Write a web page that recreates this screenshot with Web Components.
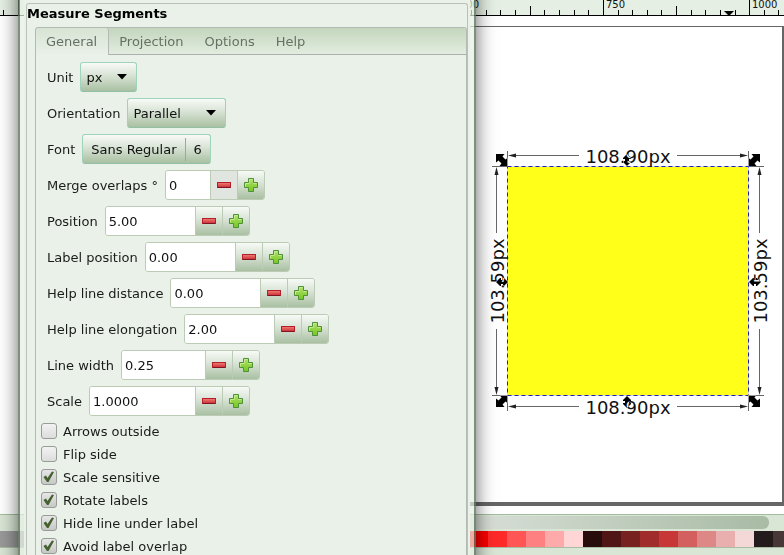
<!DOCTYPE html>
<html lang="en">
<head>
<meta charset="utf-8">
<title>Measure Segments</title>
<style>
  html, body { margin: 0; height: 100%; }
  body {
    font: 13px/16px "DejaVu Sans", sans-serif;
    color: #1a1c1a;
    overflow: hidden;
    background: #fff;
  }
</style>
</head>
<body>
<desktop-shell>
  <editor-window slot="back"></editor-window>
  <effect-dialog slot="front" heading="Measure Segments">
    <tab-book labels="General,Projection,Options,Help">
      <choice-field label="Unit" value="px" width="57"></choice-field>
      <choice-field label="Orientation" value="Parallel" width="99"></choice-field>
      <font-field label="Font" face="Sans Regular" size="6"></font-field>
      <spin-field label="Merge overlaps °" value="0" entry="45" minimum></spin-field>
      <spin-field label="Position" value="5.00" entry="90"></spin-field>
      <spin-field label="Label position" value="0.00" entry="90"></spin-field>
      <spin-field label="Help line distance" value="0.00" entry="90"></spin-field>
      <spin-field label="Help line elongation" value="2.00" entry="90"></spin-field>
      <spin-field label="Line width" value="0.25" entry="84"></spin-field>
      <spin-field label="Scale" value="1.0000" entry="106"></spin-field>
      <check-field slot="checks" label="Arrows outside"></check-field>
      <check-field slot="checks" label="Flip side"></check-field>
      <check-field slot="checks" label="Scale sensitive" checked></check-field>
      <check-field slot="checks" label="Rotate labels" checked></check-field>
      <check-field slot="checks" label="Hide line under label" checked></check-field>
      <check-field slot="checks" label="Avoid label overlap" checked></check-field>
    </tab-book>
  </effect-dialog>
</desktop-shell>

<script>
const define = (name, render) => customElements.define(name, class extends HTMLElement {
  connectedCallback() {
    if (this.shadowRoot) return;
    this.attachShadow({ mode: "open" }).innerHTML = render(this);
  }
});

define("desktop-shell", () => `
  <style>
    :host { display: grid; height: 100vh; overflow: hidden;
      grid-template: 100vh / 18px minmax(0, 458fr) minmax(0, 308fr); }
    ::slotted([slot=back]) { grid-area: 1 / 1 / 2 / 4; }
    ::slotted([slot=front]) { grid-area: 1 / 2 / 2 / 3; }
  </style>
  <slot name="back"></slot><slot name="front"></slot>`);

define("editor-window", () => `
  <style>
    :host { display: grid; grid-template: 16px minmax(0, 1fr) 17px 24px / minmax(0, 1fr);
      overflow: hidden; background: #fff; }
  </style>
  <ruler-bar></ruler-bar>
  <canvas-page></canvas-page>
  <scroll-strip></scroll-strip>
  <colour-palette></colour-palette>`);

define("ruler-bar", () => {
  let ticks = "";
  for (let k = -41; k < 60; k++) {
    const x = Math.floor(603.4 + k * 14.63) + 0.5;
    const top = k % 10 === 0 ? 0 : k % 5 === 0 ? 6 : 10;
    ticks += `M${x} ${top}V15`;
  }
  return `
  <style>
    :host { display: block; background: #e5efe3; overflow: hidden; }
    svg { display: block; }
    text { font: 10px "DejaVu Sans", sans-serif; fill: #111; }
  </style>
  <svg width="100%" height="16" aria-label="Ruler">
    <path d="${ticks}" stroke="#000" fill="none"/>
    <rect y="15" width="100%" height="1"/>
    <path d="M724 11H734L729 16Z"/>
    <text x="460" y="8">500</text>
    <text x="606" y="8">750</text>
    <text x="752" y="8">1000</text>
  </svg>`;
});

define("canvas-page", () => {
  const diag = `<path d="M-6-6H2.500L0.500-3.500L3.500-0.500L6-2.500V6H-2.500L-0.500 3.500L-3.500 0.500L-6 2.500Z"/>`;
  const vert = `<path d="M0-6L4-2V-1H2V1H4V2L0 6L-4 2V1H-2V-1H-4V-2Z"/>`;
  return `
  <style>
    :host { display: grid; padding: 10px 0 8px 60px; background: #fff; }
    .page { display: flex; justify-content: flex-end; overflow: hidden; background: #fff;
      border: solid #666; border-width: 1px 2px 4px 1px; }
    svg { display: block; flex: none; }
    text { font: 18px "DejaVu Sans", sans-serif; fill: #111; text-anchor: middle; }
    .handles { fill: #fff; mix-blend-mode: difference; }
  </style>
  <div class="page">
    <svg width="302" height="420" viewBox="480 27 302 420" role="img" aria-label="Yellow square with dimensions">
      <rect x="480" y="27" width="302" height="420" fill="#fff"/>
      <rect x="508" y="167" width="240" height="228" fill="#ffff1a"/>
      <g fill="none" stroke="#666">
        <path d="M507.500 151V166M748.500 151V166M507.500 396V411M748.500 396V411"/>
        <path d="M492 166.500H507M749 166.500H764M492 395.500H507M749 395.500H764"/>
        <path d="M510 155.500H579M677 155.500H746M510 406.500H579M677 406.500H746"/>
        <path d="M496.500 169V233M496.500 329V393M759.500 169V233M759.500 329V393"/>
      </g>
      <g fill="#222">
        <path d="M508 155.500l8-2v4zM748 155.500l-8-2v4zM508 406.500l8-2v4zM748 406.500l-8-2v4z"/>
        <path d="M496.500 167l-2 8h4zM759.500 167l-2 8h4zM496.500 395l-2-8h4zM759.500 395l-2-8h4z"/>
      </g>
      <rect x="507.500" y="166.500" width="241" height="229" fill="none" stroke="#d8d8e4"/>
      <rect x="507.500" y="166.500" width="241" height="229" fill="none" stroke="#2222b0" stroke-dasharray="4 3"/>
      <text x="628" y="163">108.90px</text>
      <text x="628" y="414">108.90px</text>
      <text transform="translate(504 281) rotate(-90)">103.59px</text>
      <text transform="translate(767 281) rotate(-90)">103.59px</text>
      <g class="handles">
        <g transform="translate(502 160)">${diag}</g>
        <g transform="translate(754 160) scale(-1 1)">${diag}</g>
        <g transform="translate(502 401) scale(-1 1)">${diag}</g>
        <g transform="translate(754 401)">${diag}</g>
        <g transform="translate(627 160)">${vert}</g>
        <g transform="translate(627 402)">${vert}</g>
        <g transform="translate(502 282) rotate(90)">${vert}</g>
        <g transform="translate(755 282) rotate(90)">${vert}</g>
      </g>
    </svg>
  </div>`;
});

define("scroll-strip", () => `
  <style>
    :host { display: grid; padding: 1px 15px 2px 24px; background: #d9e5d5;
      border-top: 1px solid #a3bc9c; box-sizing: border-box; }
    div { border-radius: 0 6px 6px 0; background: linear-gradient(90deg, #e4e8e4 50%, #a8bba4); }
  </style>
  <div></div>`);

define("colour-palette", () => {
  const colours = ("999999 999999 b3b3b3 cccccc e6e6e6 ececec f2f2f2 f9f9f9 ffffff 800000 ff0000 808000 ffff00 " +
    "008000 00ff00 008080 00ffff 000080 0000ff 800080 ff00ff 550000 800000 aa0000 d40000 ff0000 ff2a2a ff5555 " +
    "ff8080 ffaaaa ffd5d5 280b0b 501616 782121 a02c2c c83737 d35f5f de8787 e9afaf f4d7d7 241c1c 483737").split(" ");
  return `
  <style>
    :host { display: block; background: #d9e5d5; overflow: hidden; }
    div { display: flex; height: 16px; margin-left: -6px; }
    section { border-bottom: 1px solid #a9bda3; overflow: hidden; }
    i { flex: none; width: 19px; }
  </style>
  <section><div>${colours.map(c => `<i style="background:#${c}"></i>`).join("")}</div></section>`;
});

define("effect-dialog", el => `
  <style>
    :host { display: grid; margin-block: -30px; padding: 30px 4px;
      border: solid #5d735ccc; border-width: 0 2px;
      background: linear-gradient(#eaf1e9, #eaf1e9) content-box, #e6f0e4b8;
      background-clip: content-box, padding-box;
      box-shadow: 0 0 18px #0009; }
    .body { padding: 3px 2px 0; min-height: 0; overflow: hidden; }
    section { height: 100%; box-sizing: border-box; border: 1px solid #b9c1b8; border-bottom: 0; border-radius: 3px 3px 0 0; }
    h2 { margin: 2px 0 5px; font-size: 13px; line-height: 16px; color: #000; }
    .book { margin-left: 8px; }
  </style>
  <div class="body"><section><h2>${el.getAttribute("heading")}</h2><div class="book"><slot></slot></div></section></div>`);

define("tab-book", el => `
  <style>
    :host { display: block; border: solid #b3bab3; border-width: 1px 1px 0; border-radius: 3px 3px 0 0; min-height: 560px; }
    nav { display: flex; height: 27px; box-sizing: border-box; border-bottom: 1px solid #a9b0a9;
      border-radius: 3px 3px 0 0; background: linear-gradient(#c3d6bd, #e2ecdf); }
    button { font: inherit; color: #667166; border: 0; background: none; margin: 0; padding: 0 11px 0 10px; height: 27px; }
    button[aria-selected=true] { border-right: 1px solid #b3bab3; border-radius: 3px 3px 0 0;
      background: linear-gradient(#d7e3d3, #eaf1e9); }
    .fields { display: grid; gap: 6px; padding: 7px 11px 4px; }
    .checks { display: grid; padding-left: 5px; }
  </style>
  <nav role="tablist">${el.getAttribute("labels").split(",").map((t, i) =>
    `<button role="tab" aria-selected="${i === 0}">${t}</button>`).join("")}</nav>
  <div class="fields"><slot></slot></div>
  <div class="checks"><slot name="checks"></slot></div>`);

define("choice-field", el => `
  <style>
    :host { display: flex; height: 30px; align-items: center; gap: 7px; }
    label { padding-top: 1px; }
    .box { display: grid; align-items: center; height: 30px; }
    select { grid-area: 1 / 1; appearance: none; box-sizing: border-box; width: ${el.getAttribute("width")}px; height: 30px;
      font: inherit; color: #111; padding: 1px 22px 0 5px; border: 1px solid #9fd3bb; border-bottom-color: #92c0a6;
      border-radius: 3px; background: linear-gradient(#f8faf7, #d8e3d5 45%, #a9c0a2); }
    svg { grid-area: 1 / 1; justify-self: end; margin-right: 9px; pointer-events: none; }
  </style>
  <label for="c">${el.getAttribute("label")}</label>
  <div class="box">
    <select id="c"><option>${el.getAttribute("value")}</option></select>
    <svg width="12" height="6"><path d="M1 0H11L6 5.500Z"/></svg>
  </div>`);

define("font-field", el => `
  <style>
    :host { display: flex; height: 30px; align-items: center; gap: 7px; }
    label { padding-top: 1px; }
    button { display: flex; align-items: center; height: 30px; padding: 0; font: inherit; color: #111;
      border: 1px solid #9fd3bb; border-bottom-color: #92c0a6; border-radius: 3px;
      background: linear-gradient(#f8faf7, #d8e3d5 45%, #a9c0a2); }
    span { padding: 4px 8px 3px; line-height: 16px; }
    span + span { border-left: 1px solid #98ab93; }
  </style>
  <label for="f">${el.getAttribute("label")}</label>
  <button id="f"><span>${el.getAttribute("face")}</span><span>${el.getAttribute("size")}</span></button>`);

define("spin-field", el => `
  <style>
    :host { display: flex; height: 30px; align-items: center; gap: 7px; }
    label { padding-top: 1px; }
    .box { display: flex; height: 30px; box-sizing: border-box; border: 1px solid #bccbb6; border-radius: 3px; overflow: hidden; }
    input { box-sizing: border-box; width: ${el.getAttribute("entry") - 1}px; padding: 1px 3px 0; border: 0; background: #fff;
      font: inherit; color: #111; outline: 0; }
    button { display: grid; place-items: center; box-sizing: border-box; width: 27px; padding: 0; border: 0;
      border-left: 1px solid #bccbb6; background: linear-gradient(#f7faf6, #d8e3d5 45%, #a9c0a2); }
    button:disabled { background: #e0e5df; }
  </style>
  <label for="s">${el.getAttribute("label")}</label>
  <div class="box">
    <input id="s" value="${el.getAttribute("value")}">
    <button aria-label="Decrease" ${el.hasAttribute("minimum") ? "disabled" : ""}>
      <svg width="14" height="6">
        <defs><linearGradient id="r" x2="0" y2="1"><stop stop-color="#f08078"/><stop offset="1" stop-color="#cf2b30"/></linearGradient></defs>
        <rect x=".5" y=".5" width="13" height="5" fill="url(#r)" stroke="#b3202c"/>
        <path d="M1 5.500H13" stroke="#7d1526"/>
      </svg>
    </button>
    <button aria-label="Increase">
      <svg width="14" height="14">
        <defs><linearGradient id="g" x2="0" y2="1"><stop stop-color="#b4e070"/><stop offset="1" stop-color="#73c81e"/></linearGradient></defs>
        <path d="M4.500 .5H9.500V4.500H13.500V9.500H9.500V13.500H4.500V9.500H.5V4.500H4.500Z" fill="url(#g)" stroke="#4f9138"/>
        <path d="M5.500 4.500V1.500H8.500M1.500 8.500V5.500H5.500M9.500 5.500H12.500" fill="none" stroke="#c6ec8e"/>
      </svg>
    </button>
  </div>`);

define("check-field", el => `
  <style>
    :host { display: block; height: 23px; }
    label { display: flex; align-items: center; gap: 6px; height: 23px; }
    .box { display: grid; width: 16px; height: 16px; margin-bottom: 2px; }
    input { grid-area: 1 / 1; appearance: none; margin: 0; box-sizing: border-box; width: 16px; height: 16px;
      border: 1px solid #999b99; border-radius: 3px; background: linear-gradient(#f2f2f2, #dcdcdc); }
    input:checked { background: linear-gradient(#e6e6e6, #c6c8c6); }
    svg { grid-area: 1 / 1; pointer-events: none; visibility: hidden; }
    input:checked + svg { visibility: visible; }
  </style>
  <label>
    <span class="box">
      <input type="checkbox" ${el.hasAttribute("checked") ? "checked" : ""}>
      <svg width="16" height="16"><path d="M2.500 8L5 6.500L6.500 9L11 2.500L13 3L7.500 13H6Z" fill="#44612f"/></svg>
    </span>
    <span>${el.getAttribute("label")}</span>
  </label>`);
</script>
</body>
</html>
